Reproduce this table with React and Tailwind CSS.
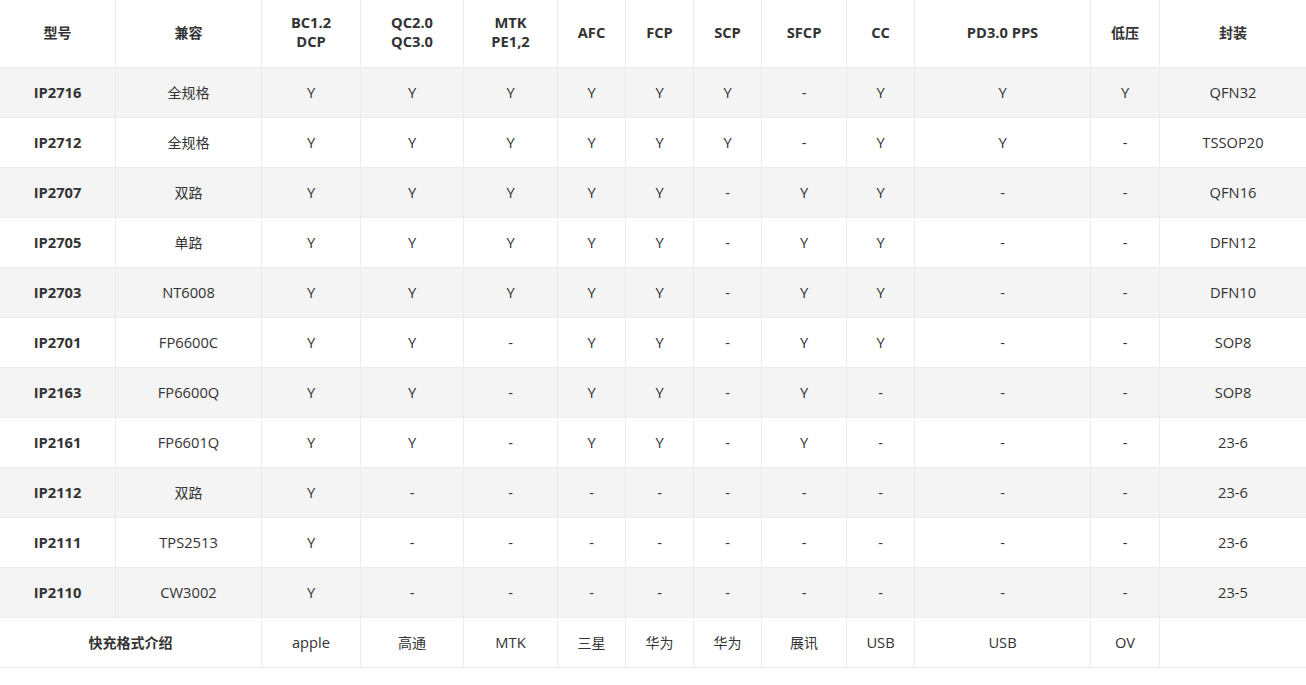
const cols = ['116px', '146px', '99px', '103px', '94px', '68px', '68px', '68px', '85px', '68px', '176px', '69px', '1fr'];

const headers = [
  ['型号'],
  ['兼容'],
  ['BC1.2', 'DCP'],
  ['QC2.0', 'QC3.0'],
  ['MTK', 'PE1,2'],
  ['AFC'],
  ['FCP'],
  ['SCP'],
  ['SFCP'],
  ['CC'],
  ['PD3.0 PPS'],
  ['低压'],
  ['封装'],
];

const rows = [
  ['IP2716', '全规格', 'Y', 'Y', 'Y', 'Y', 'Y', 'Y', '-', 'Y', 'Y', 'Y', 'QFN32'],
  ['IP2712', '全规格', 'Y', 'Y', 'Y', 'Y', 'Y', 'Y', '-', 'Y', 'Y', '-', 'TSSOP20'],
  ['IP2707', '双路', 'Y', 'Y', 'Y', 'Y', 'Y', '-', 'Y', 'Y', '-', '-', 'QFN16'],
  ['IP2705', '单路', 'Y', 'Y', 'Y', 'Y', 'Y', '-', 'Y', 'Y', '-', '-', 'DFN12'],
  ['IP2703', 'NT6008', 'Y', 'Y', 'Y', 'Y', 'Y', '-', 'Y', 'Y', '-', '-', 'DFN10'],
  ['IP2701', 'FP6600C', 'Y', 'Y', '-', 'Y', 'Y', '-', 'Y', 'Y', '-', '-', 'SOP8'],
  ['IP2163', 'FP6600Q', 'Y', 'Y', '-', 'Y', 'Y', '-', 'Y', '-', '-', '-', 'SOP8'],
  ['IP2161', 'FP6601Q', 'Y', 'Y', '-', 'Y', 'Y', '-', 'Y', '-', '-', '-', '23-6'],
  ['IP2112', '双路', 'Y', '-', '-', '-', '-', '-', '-', '-', '-', '-', '23-6'],
  ['IP2111', 'TPS2513', 'Y', '-', '-', '-', '-', '-', '-', '-', '-', '-', '23-6'],
  ['IP2110', 'CW3002', 'Y', '-', '-', '-', '-', '-', '-', '-', '-', '-', '23-5'],
];

const footer = ['apple', '高通', 'MTK', '三星', '华为', '华为', '展讯', 'USB', 'USB', 'OV', ''];

// Latin text in the original renders a touch wider than the CJK text
const isCjk = (s) => /[\u4e00-\u9fff]/.test(s);
const size = (s) => (isCjk(s) ? 'text-[14px]' : 'text-[14.7px]');

export default function App() {
  return (
    <div className="w-[1306px] h-[685px] bg-white text-[#333] font-['Open_Sans','Noto_Sans_CJK_SC',sans-serif]">
      <div className="grid" style={{ gridTemplateColumns: cols.join(' ') }}>
        {/* Header */}
        {headers.map((h, i) => (
          <div
            key={'h' + i}
            className={`h-[68px] pb-[3px] flex flex-col items-center justify-center font-bold leading-[19px] border-b border-[#ececec] ${i < 12 ? 'border-r' : ''} ${size(h[0])}`}
          >
            {h.map((line, j) => (
              <span key={j}>{line}</span>
            ))}
          </div>
        ))}

        {/* Rows */}
        {rows.map((row, r) =>
          row.map((cell, c) => (
            <div
              key={r + '-' + c}
              className={`h-[50px] pb-[1px] flex items-center justify-center border-b border-[#ececec] ${c < 12 ? 'border-r' : ''} ${r % 2 === 0 ? 'bg-[#f4f4f4]' : 'bg-white'} ${c === 0 ? 'font-bold' : ''} ${size(cell)}`}
            >
              {cell}
            </div>
          ))
        )}

        {/* Footer */}
        <div className="col-span-2 h-[50px] pb-[1px] flex items-center justify-center font-bold border-b border-r border-[#ececec] text-[14px]">
          快充格式介绍
        </div>
        {footer.map((cell, i) => (
          <div
            key={'f' + i}
            className={`h-[50px] pb-[1px] flex items-center justify-center border-b border-[#ececec] ${i < 10 ? 'border-r' : ''} ${size(cell)}`}
          >
            {cell}
          </div>
        ))}
      </div>
    </div>
  );
}
